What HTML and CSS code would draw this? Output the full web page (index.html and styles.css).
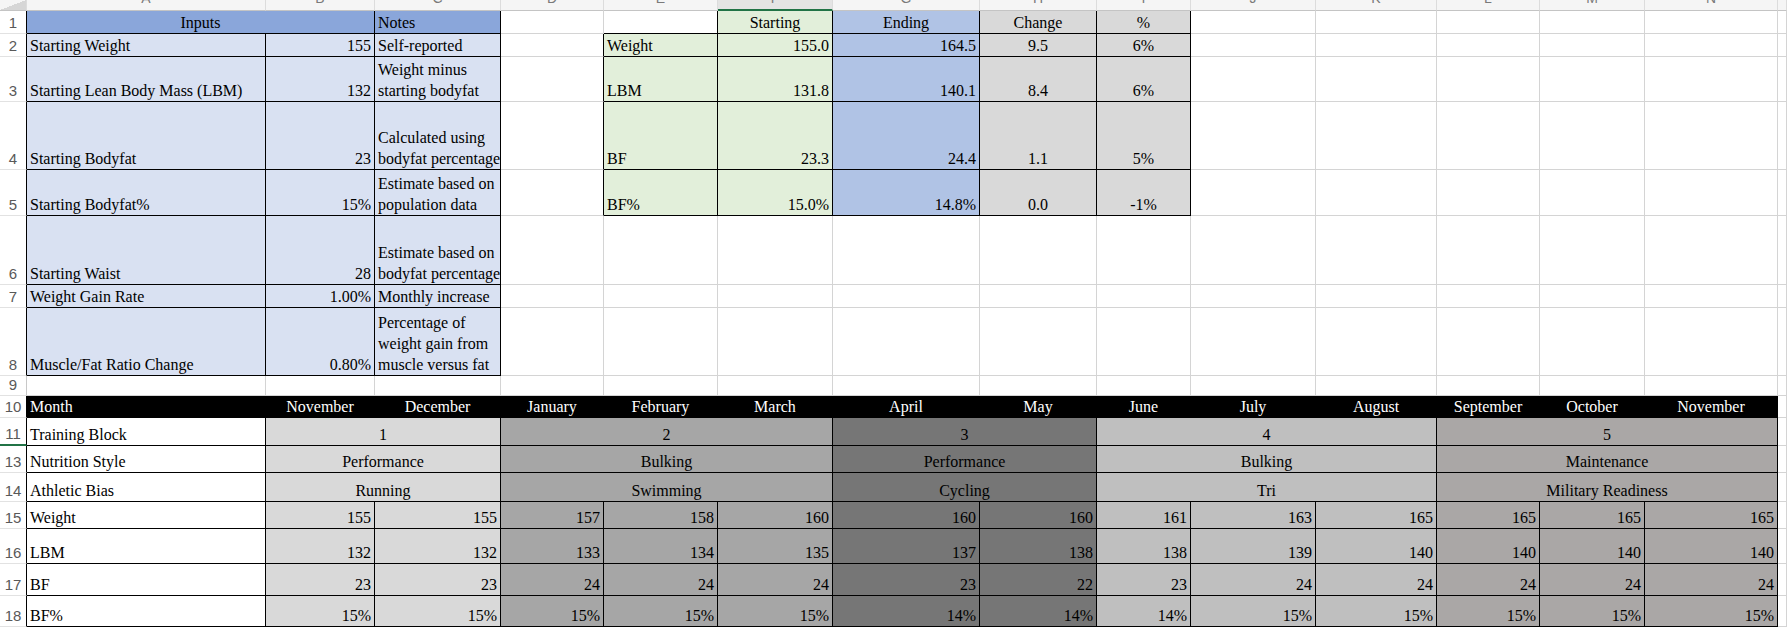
FILE: index.html
```html
<!DOCTYPE html>
<html lang="en">
<head>
<meta charset="utf-8">
<title>Body Composition Plan</title>
<link rel="stylesheet" href="styles.css">
</head>
<body>
<div class="sheet">
  <!-- column header strip -->
  <div class="ch corner"></div>
  <div class="ch"><span>A</span></div>
  <div class="ch"><span>B</span></div>
  <div class="ch"><span>C</span></div>
  <div class="ch"><span>D</span></div>
  <div class="ch"><span>E</span></div>
  <div class="ch sel"><span>F</span></div>
  <div class="ch"><span>G</span></div>
  <div class="ch"><span>H</span></div>
  <div class="ch"><span>I</span></div>
  <div class="ch"><span>J</span></div>
  <div class="ch"><span>K</span></div>
  <div class="ch"><span>L</span></div>
  <div class="ch"><span>M</span></div>
  <div class="ch"><span>N</span></div>
  <div class="ch"></div>

  <!-- row 1 -->
  <div class="rh k">1</div>
  <div class="c hb m br bb s2">Inputs</div>
  <div class="c hb br bb">Notes</div>
  <div class="c"></div>
  <div class="c br bb"></div>
  <div class="c gr m br bb">Starting</div>
  <div class="c eb m br bb">Ending</div>
  <div class="c g1 m br bb">Change</div>
  <div class="c g1 m br bb">%</div>
  <div class="c"></div><div class="c"></div><div class="c"></div><div class="c"></div><div class="c"></div><div class="c"></div>

  <!-- row 2 -->
  <div class="rh k">2</div>
  <div class="c lb br bb">Starting Weight</div>
  <div class="c lb r br bb">155</div>
  <div class="c lb br bb">Self-reported</div>
  <div class="c br"></div>
  <div class="c gr br bb">Weight</div>
  <div class="c gr r br bb">155.0</div>
  <div class="c eb r br bb">164.5</div>
  <div class="c g1 m br bb">9.5</div>
  <div class="c g1 m br bb">6%</div>
  <div class="c"></div><div class="c"></div><div class="c"></div><div class="c"></div><div class="c"></div><div class="c"></div>

  <!-- row 3 -->
  <div class="rh k">3</div>
  <div class="c lb br bb">Starting Lean Body Mass (LBM)</div>
  <div class="c lb r br bb">132</div>
  <div class="c lb br bb">Weight minus<br>starting bodyfat</div>
  <div class="c br"></div>
  <div class="c gr br bb">LBM</div>
  <div class="c gr r br bb">131.8</div>
  <div class="c eb r br bb">140.1</div>
  <div class="c g1 m br bb">8.4</div>
  <div class="c g1 m br bb">6%</div>
  <div class="c"></div><div class="c"></div><div class="c"></div><div class="c"></div><div class="c"></div><div class="c"></div>

  <!-- row 4 -->
  <div class="rh k">4</div>
  <div class="c lb br bb">Starting Bodyfat</div>
  <div class="c lb r br bb">23</div>
  <div class="c lb br bb">Calculated using<br>bodyfat percentage</div>
  <div class="c br"></div>
  <div class="c gr br bb">BF</div>
  <div class="c gr r br bb">23.3</div>
  <div class="c eb r br bb">24.4</div>
  <div class="c g1 m br bb">1.1</div>
  <div class="c g1 m br bb">5%</div>
  <div class="c"></div><div class="c"></div><div class="c"></div><div class="c"></div><div class="c"></div><div class="c"></div>

  <!-- row 5 -->
  <div class="rh k">5</div>
  <div class="c lb br bb">Starting Bodyfat%</div>
  <div class="c lb r br bb">15%</div>
  <div class="c lb br bb">Estimate based on<br>population data</div>
  <div class="c br"></div>
  <div class="c gr br bb">BF%</div>
  <div class="c gr r br bb">15.0%</div>
  <div class="c eb r br bb">14.8%</div>
  <div class="c g1 m br bb">0.0</div>
  <div class="c g1 m br bb">-1%</div>
  <div class="c"></div><div class="c"></div><div class="c"></div><div class="c"></div><div class="c"></div><div class="c"></div>

  <!-- row 6 -->
  <div class="rh k">6</div>
  <div class="c lb br bb">Starting Waist</div>
  <div class="c lb r br bb">28</div>
  <div class="c lb br bb">Estimate based on<br>bodyfat percentage</div>
  <div class="c"></div><div class="c"></div><div class="c"></div><div class="c"></div><div class="c"></div><div class="c"></div>
  <div class="c"></div><div class="c"></div><div class="c"></div><div class="c"></div><div class="c"></div><div class="c"></div>

  <!-- row 7 -->
  <div class="rh k">7</div>
  <div class="c lb br bb">Weight Gain Rate</div>
  <div class="c lb r br bb">1.00%</div>
  <div class="c lb br bb">Monthly increase</div>
  <div class="c"></div><div class="c"></div><div class="c"></div><div class="c"></div><div class="c"></div><div class="c"></div>
  <div class="c"></div><div class="c"></div><div class="c"></div><div class="c"></div><div class="c"></div><div class="c"></div>

  <!-- row 8 -->
  <div class="rh k">8</div>
  <div class="c lb br bb">Muscle/Fat Ratio Change</div>
  <div class="c lb r br bb">0.80%</div>
  <div class="c lb br bb">Percentage of<br>weight gain from<br>muscle versus fat</div>
  <div class="c"></div><div class="c"></div><div class="c"></div><div class="c"></div><div class="c"></div><div class="c"></div>
  <div class="c"></div><div class="c"></div><div class="c"></div><div class="c"></div><div class="c"></div><div class="c"></div>

  <!-- row 9 -->
  <div class="rh">9</div>
  <div class="c"></div><div class="c"></div><div class="c"></div><div class="c"></div><div class="c"></div>
  <div class="c"></div><div class="c"></div><div class="c"></div><div class="c"></div><div class="c"></div>
  <div class="c"></div><div class="c"></div><div class="c"></div><div class="c"></div><div class="c"></div>

  <!-- row 10 -->
  <div class="rh k">10</div>
  <div class="c blk">Month</div>
  <div class="c blk m">November</div>
  <div class="c blk m">December</div>
  <div class="c blk m">January</div>
  <div class="c blk m">February</div>
  <div class="c blk m">March</div>
  <div class="c blk m">April</div>
  <div class="c blk m">May</div>
  <div class="c blk m">June</div>
  <div class="c blk m">July</div>
  <div class="c blk m">August</div>
  <div class="c blk m">September</div>
  <div class="c blk m">October</div>
  <div class="c blk m">November</div>
  <div class="c"></div>

  <!-- row 11 -->
  <div class="rh k hid">11</div>
  <div class="c br bb">Training Block</div>
  <div class="c g1 m br bb s2">1</div>
  <div class="c g2 m br bb s3">2</div>
  <div class="c g3 m br bb s2">3</div>
  <div class="c g4 m br bb s3">4</div>
  <div class="c g5 m br bb s3">5</div>
  <div class="c"></div>

  <!-- row 13 -->
  <div class="rh k">13</div>
  <div class="c br bb">Nutrition Style</div>
  <div class="c g1 m br bb s2">Performance</div>
  <div class="c g2 m br bb s3">Bulking</div>
  <div class="c g3 m br bb s2">Performance</div>
  <div class="c g4 m br bb s3">Bulking</div>
  <div class="c g5 m br bb s3">Maintenance</div>
  <div class="c"></div>

  <!-- row 14 -->
  <div class="rh k">14</div>
  <div class="c br bb">Athletic Bias</div>
  <div class="c g1 m br bb s2">Running</div>
  <div class="c g2 m br bb s3">Swimming</div>
  <div class="c g3 m br bb s2">Cycling</div>
  <div class="c g4 m br bb s3">Tri</div>
  <div class="c g5 m br bb s3">Military Readiness</div>
  <div class="c"></div>

  <!-- row 15 -->
  <div class="rh k">15</div>
  <div class="c br bb">Weight</div>
  <div class="c g1 r br bb">155</div>
  <div class="c g1 r br bb">155</div>
  <div class="c g2 r br bb">157</div>
  <div class="c g2 r br bb">158</div>
  <div class="c g2 r br bb">160</div>
  <div class="c g3 r br bb">160</div>
  <div class="c g3 r br bb">160</div>
  <div class="c g4 r br bb">161</div>
  <div class="c g4 r br bb">163</div>
  <div class="c g4 r br bb">165</div>
  <div class="c g5 r br bb">165</div>
  <div class="c g5 r br bb">165</div>
  <div class="c g5 r br bb">165</div>
  <div class="c"></div>

  <!-- row 16 -->
  <div class="rh k">16</div>
  <div class="c br bb">LBM</div>
  <div class="c g1 r br bb">132</div>
  <div class="c g1 r br bb">132</div>
  <div class="c g2 r br bb">133</div>
  <div class="c g2 r br bb">134</div>
  <div class="c g2 r br bb">135</div>
  <div class="c g3 r br bb">137</div>
  <div class="c g3 r br bb">138</div>
  <div class="c g4 r br bb">138</div>
  <div class="c g4 r br bb">139</div>
  <div class="c g4 r br bb">140</div>
  <div class="c g5 r br bb">140</div>
  <div class="c g5 r br bb">140</div>
  <div class="c g5 r br bb">140</div>
  <div class="c"></div>

  <!-- row 17 -->
  <div class="rh k">17</div>
  <div class="c br bb">BF</div>
  <div class="c g1 r br bb">23</div>
  <div class="c g1 r br bb">23</div>
  <div class="c g2 r br bb">24</div>
  <div class="c g2 r br bb">24</div>
  <div class="c g2 r br bb">24</div>
  <div class="c g3 r br bb">23</div>
  <div class="c g3 r br bb">22</div>
  <div class="c g4 r br bb">23</div>
  <div class="c g4 r br bb">24</div>
  <div class="c g4 r br bb">24</div>
  <div class="c g5 r br bb">24</div>
  <div class="c g5 r br bb">24</div>
  <div class="c g5 r br bb">24</div>
  <div class="c"></div>

  <!-- row 18 -->
  <div class="rh k">18</div>
  <div class="c br bb">BF%</div>
  <div class="c g1 r br bb">15%</div>
  <div class="c g1 r br bb">15%</div>
  <div class="c g2 r br bb">15%</div>
  <div class="c g2 r br bb">15%</div>
  <div class="c g2 r br bb">15%</div>
  <div class="c g3 r br bb">14%</div>
  <div class="c g3 r br bb">14%</div>
  <div class="c g4 r br bb">14%</div>
  <div class="c g4 r br bb">15%</div>
  <div class="c g4 r br bb">15%</div>
  <div class="c g5 r br bb">15%</div>
  <div class="c g5 r br bb">15%</div>
  <div class="c g5 r br bb">15%</div>
  <div class="c"></div>
</div>
</body>
</html>
```

FILE: styles.css
```css
html, body {
  margin: 0;
  padding: 0;
  background: #ffffff;
}

.sheet {
  display: grid;
  grid-template-columns: 27px 239px 109px 126px 103px 114px 115px 147px 117px 94px 125px 121px 103px 105px 133px 9px;
  grid-template-rows: 11px 23px 23px 45px 68px 46px 69px 23px 68px 20px 22px 28px 27px 29px 27px 35px 32px 31px;
  width: 1787px;
  height: 628px;
  overflow: hidden;
  font-family: "Liberation Serif", "Times New Roman", serif;
  font-size: 16px;
  line-height: 21px;
  color: #000000;
}

/* column header strip */
.ch {
  box-sizing: border-box;
  background: #f5f5f5;
  border-right: 1px solid #dcdcdc;
  border-bottom: 1px solid #c4c4c4;
  overflow: hidden;
  font-family: "Liberation Sans", Arial, sans-serif;
  font-size: 14px;
  line-height: 16px;
  color: #7a7a7a;
  text-align: center;
}

.ch span {
  display: block;
  margin-top: -10px;
}

.ch.corner {
  background: linear-gradient(to bottom right, #f5f5f5 50%, #d6d6d6 50%);
}

.ch.sel {
  background: #e4e4e4;
  border-bottom: 2px solid #217346;
}

/* row headers */
.rh {
  box-sizing: border-box;
  display: flex;
  flex-direction: column;
  justify-content: flex-end;
  background: #ffffff;
  border-right: 1px solid #c8c8c8;
  border-bottom: 1px solid #e2e2e2;
  font-family: "Liberation Sans", Arial, sans-serif;
  font-size: 15px;
  line-height: 21px;
  color: #595959;
  text-align: center;
}

.rh.k {
  border-right-color: #000000;
}

.rh.hid {
  border-bottom: 2px solid #217346;
}

/* cells */
.c {
  box-sizing: border-box;
  display: flex;
  flex-direction: column;
  justify-content: flex-end;
  min-width: 0;
  padding: 0 3px;
  white-space: nowrap;
  border-right: 1px solid #d4d4d4;
  border-bottom: 1px solid #d4d4d4;
  text-align: left;
}

.r { text-align: right; }
.m { text-align: center; }

.br { border-right-color: #000000; }
.bb { border-bottom-color: #000000; }

.s2 { grid-column: span 2; }
.s3 { grid-column: span 3; }

/* fills */
.hb { background: #8aa6da; }
.lb { background: #d9e1f2; }
.gr { background: #e2efda; }
.eb { background: #b0c3e5; }
.g1 { background: #d9d9d9; }
.g2 { background: #a6a6a6; }
.g3 { background: #767676; }
.g4 { background: #bfbfbf; }
.g5 { background: #aaa7a6; }

.blk {
  background: #000000;
  color: #ffffff;
  border-right-color: #000000;
  border-bottom-color: #000000;
}
```
